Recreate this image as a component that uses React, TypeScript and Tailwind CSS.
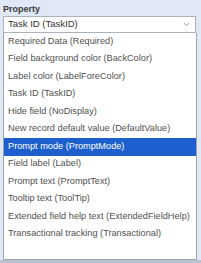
import { ChevronDown } from 'lucide-react';

const OPTIONS = [
  'Required Data (Required)',
  'Field background color (BackColor)',
  'Label color (LabelForeColor)',
  'Task ID (TaskID)',
  'Hide field (NoDisplay)',
  'New record default value (DefaultValue)',
  'Prompt mode (PromptMode)',
  'Field label (Label)',
  'Prompt text (PromptText)',
  'Tooltip text (ToolTip)',
  'Extended field help text (ExtendedFieldHelp)',
  'Transactional tracking (Transactional)',
];

const SELECTED = 'Prompt mode (PromptMode)';

export default function App() {
  return (
    <div className="flex h-[263px] w-[201px] flex-col overflow-hidden bg-[#dfe8f4] font-['Liberation_Sans',Arial,sans-serif]">
      <div className="px-[3px] pt-[3px] text-[9px] leading-[12px] font-bold text-[#3a3a3a]">Property</div>
      <div className="mt-[1px] ml-[3px] mr-[5px] flex h-[17px] items-center justify-between border border-[#a9b3bf] bg-white pl-[4px] pr-[4px] text-[9.5px] text-[#333]">
        <span>Task ID (TaskID)</span>
        <ChevronDown className="h-[9px] w-[9px] text-[#777]" strokeWidth={2} />
      </div>
      <div className="ml-[3px] mr-[4px] flex h-[227px] flex-col border-x border-b border-[#9da6b2] bg-white">
        {OPTIONS.map((opt) => (
          <div
            key={opt}
            className={`flex h-[17.5px] shrink-0 items-center px-[4px] text-[9.2px] whitespace-nowrap ${
              opt === SELECTED ? 'bg-[#1d5fcf] text-white' : 'text-[#505050]'
            }`}
          >
            {opt}
          </div>
        ))}
      </div>
      <div className="flex-1 bg-[#b9c3cf]" />
    </div>
  );
}
